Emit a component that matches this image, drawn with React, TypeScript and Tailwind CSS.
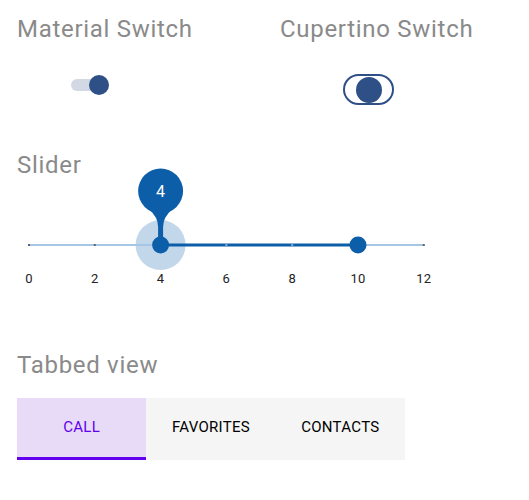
// Demo page: material/cupertino switches, a discrete range slider and a tab bar

const TICKS = [0, 2, 4, 6, 8, 10, 12];
const X0 = 29;
const STEP = 65.8;

function SectionTitle({ children, className = "" }: { children: string; className?: string }) {
    return (
        <h2 className={`text-[24px] leading-[32px] font-normal tracking-[0.7px] text-[#8a8a8a] ${className}`}>
            {children}
        </h2>
    );
}

function MaterialSwitch() {
    return (
        <div className="relative ml-[54px] mt-[30px] h-[20px] w-[38px]">
            <div className="absolute left-0 top-[4px] h-[12px] w-[34px] rounded-full bg-[#d3d9e4]" />
            <div className="absolute right-0 top-0 h-[20px] w-[20px] rounded-full bg-[#2f4f87]" />
        </div>
    );
}

function CupertinoSwitch() {
    return (
        <div className="ml-[63px] mt-[29px] flex h-[31px] w-[51px] items-center justify-center rounded-full border-2 border-[#2f4f87]">
            <div className="h-[26px] w-[26px] rounded-full bg-[#2f4f87]" />
        </div>
    );
}

function RangeSlider() {
    const ty = 64;
    const xs = TICKS.map((_, i) => X0 + i * STEP);
    const a = xs[2];
    const b = xs[5];
    return (
        <svg width={529} height={110} className="block overflow-visible">
            {/* halo */}
            <circle cx={a} cy={ty} r={25} fill="#c3d7eb" />
            {/* inactive track */}
            <line x1={xs[0]} y1={ty} x2={xs[6]} y2={ty} stroke="#a6c6e6" strokeWidth={2} />
            {/* active track */}
            <line x1={a} y1={ty} x2={b} y2={ty} stroke="#0d5ea8" strokeWidth={3} />
            {xs.map((x, i) => (
                <rect
                    key={i}
                    x={x - 1}
                    y={ty - 1}
                    width={2}
                    height={2}
                    fill={i > 2 && i < 5 ? "#7fa9d4" : "#5b6470"}
                />
            ))}
            {/* value indicator */}
            <path
                d={`M ${a - 12} ${ty - 36} Q ${a - 2.5} ${ty - 28} ${a - 2.5} ${ty - 18} L ${a - 2.5} ${ty - 8} L ${a + 2.5} ${ty - 8} L ${a + 2.5} ${ty - 18} Q ${a + 2.5} ${ty - 28} ${a + 12} ${ty - 36} Z`}
                fill="#0d5ea8"
            />
            <circle cx={a} cy={ty - 54} r={22.5} fill="#0d5ea8" />
            <text
                x={a}
                y={ty - 48}
                textAnchor="middle"
                fontFamily="Roboto, sans-serif"
                fontSize={16}
                fill="#ffffff"
            >
                4
            </text>
            {/* thumbs */}
            <circle cx={a} cy={ty} r={8.5} fill="#0d5ea8" />
            <circle cx={b} cy={ty} r={8.5} fill="#0d5ea8" />
            {TICKS.map((t, i) => (
                <text
                    key={t}
                    x={xs[i]}
                    y={101.7}
                    textAnchor="middle"
                    fontFamily="Roboto, sans-serif"
                    fontSize={13}
                    letterSpacing={0.3}
                    fill="#222222"
                >
                    {t}
                </text>
            ))}
        </svg>
    );
}

function Tabs() {
    const tabs = ["CALL", "FAVORITES", "CONTACTS"];
    return (
        <div className="ml-[17px] mt-[17px] flex w-[388px]">
            {tabs.map((t, i) => (
                <div
                    key={t}
                    className={
                        i === 0
                            ? "flex h-[62px] flex-1 items-center justify-center border-b-[3px] border-[#6200ee] bg-[#e8dbf8] text-[15px] tracking-[0.3px] text-[#6200ee]"
                            : "flex h-[62px] flex-1 items-center justify-center border-b-[3px] border-transparent bg-[#f5f5f5] text-[15px] tracking-[0.3px] text-black"
                    }
                >
                    {t}
                </div>
            ))}
        </div>
    );
}

export default function App() {
    return (
        <div className="h-[500px] w-[529px] overflow-hidden bg-white font-['Roboto',sans-serif]">
            {/* Switches */}
            <div className="flex pt-[13px]">
                <div className="w-[280px] pl-[17px]">
                    <SectionTitle>Material Switch</SectionTitle>
                    <MaterialSwitch />
                </div>
                <div>
                    <SectionTitle>Cupertino Switch</SectionTitle>
                    <CupertinoSwitch />
                </div>
            </div>

            {/* Slider */}
            <SectionTitle className="ml-[17px] mt-[44px]">Slider</SectionTitle>
            <RangeSlider />

            {/* Tabs */}
            <SectionTitle className="ml-[17px] mt-[58px]">Tabbed view</SectionTitle>
            <Tabs />
        </div>
    );
}
